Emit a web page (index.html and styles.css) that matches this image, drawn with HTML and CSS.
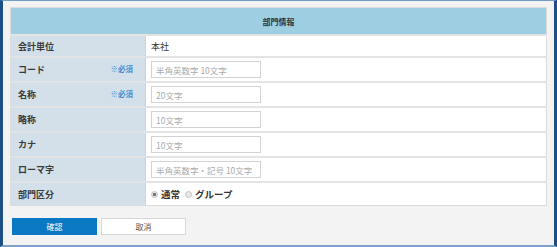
FILE: index.html
```html
<!DOCTYPE html>
<html lang="ja">
<head>
    <meta charset="UTF-8">
    <title>部門情報</title>
    <link rel="stylesheet" href="styles.css">
</head>
<body>
    <div class="frame">
        <table class="form-table">
            <tr>
                <th class="caption" colspan="2">部門情報</th>
            </tr>
            <tr class="row-first">
                <th>会計単位</th>
                <td>本社</td>
            </tr>
            <tr>
                <th><span>コード</span><span class="required">※必須</span></th>
                <td><input type="text" placeholder="半角英数字 10文字"></td>
            </tr>
            <tr>
                <th><span>名称</span><span class="required">※必須</span></th>
                <td><input type="text" placeholder="20文字"></td>
            </tr>
            <tr>
                <th>略称</th>
                <td><input type="text" placeholder="10文字"></td>
            </tr>
            <tr>
                <th>カナ</th>
                <td><input type="text" placeholder="10文字"></td>
            </tr>
            <tr>
                <th>ローマ字</th>
                <td><input type="text" placeholder="半角英数字・記号 10文字"></td>
            </tr>
            <tr class="row-last">
                <th>部門区分</th>
                <td class="radios">
                    <label><input type="radio" name="kubun" checked>通常</label>
                    <label><input type="radio" name="kubun">グループ</label>
                </td>
            </tr>
        </table>
        <div class="actions">
            <button type="button" class="btn btn-primary">確認</button>
            <button type="button" class="btn">取消</button>
        </div>
    </div>
</body>
</html>
```

FILE: styles.css
```css
html, body {
    margin: 0;
    height: 100%;
}
body {
    font-family: "Noto Sans CJK JP", "Noto Sans", sans-serif;
    font-size: 9px;
    color: #333;
    background: #fff;
}
.frame {
    box-sizing: border-box;
    height: 247px;
    background: #f3f3f3;
    border-left: 3px solid #1d4f86;
    border-right: 3px solid #1d4f86;
    border-top: 1px solid #6f9cc8;
    border-bottom: 2px solid #7ba3cc;
    padding: 6px 0 0 7px;
}
.form-table {
    width: 537px;
    border-collapse: collapse;
    border: 1px solid #dcdcdc;
    background: #fff;
}
.form-table th,
.form-table td {
    padding: 0;
    border-top: 2px solid #e3e3e3;
    height: 23px;
    text-align: left;
}
.form-table th {
    width: 115px;
    padding: 0 12px 0 7px;
    background: #d3e0ea;
    border-right: 1px solid #c9d4dd;
    font-weight: bold;
    color: #3a3a3a;
}
.form-table th span:first-child {
    float: left;
}
.form-table td {
    padding-left: 5px;
}
.form-table th.caption {
    height: 26px;
    border: none;
    padding: 0;
    background: #9ecee2;
    text-align: center;
    font-size: 8px;
    color: #333;
}
.form-table .row-first th,
.form-table .row-first td {
    height: 20px;
}
.form-table .row-last th,
.form-table .row-last td {
    height: 22px;
}
.required {
    float: right;
    font-size: 7.5px;
    color: #3b8fd3;
    font-weight: bold;
}
.form-table input[type="text"] {
    box-sizing: border-box;
    display: block;
    width: 110px;
    height: 17px;
    margin: 0;
    padding: 0 0 0 4px;
    border: 1px solid #d2d2d2;
    font-family: inherit;
    font-size: 8.5px;
    color: #333;
}
.form-table input::placeholder {
    color: #aaa;
}
.radios label {
    display: inline-flex;
    align-items: center;
    margin-right: 3px;
    font-weight: bold;
    font-size: 9.5px;
}
.radios input[type="radio"] {
    appearance: none;
    box-sizing: border-box;
    width: 7px;
    height: 7px;
    margin: 0 3px 0 0;
    border: 1px solid #c4c4c4;
    border-radius: 50%;
    background: #e6e6e6;
}
.radios input[type="radio"]:checked {
    background: radial-gradient(circle, #777 0 1.5px, #e6e6e6 2px);
}
.actions {
    display: flex;
    gap: 4px;
    margin: 12px 0 0 2px;
}
.btn {
    box-sizing: border-box;
    width: 85px;
    height: 17px;
    padding: 0;
    border: 1px solid #d8d8d8;
    background: #fff;
    color: #555;
    font-family: inherit;
    font-size: 8px;
}
.btn-primary {
    background: #0b78c3;
    border-color: #0b78c3;
    color: #fff;
}
```
